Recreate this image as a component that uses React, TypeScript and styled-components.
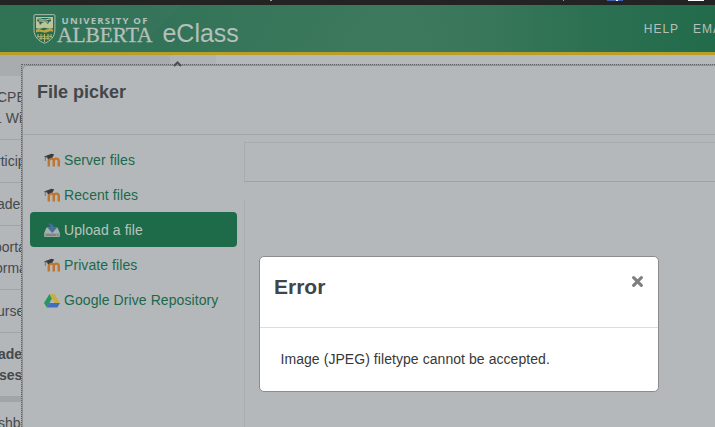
import React from "react";
import styled, { createGlobalStyle } from "styled-components";

const GlobalStyle = createGlobalStyle`
  * { box-sizing: border-box; }
  body { margin: 0; overflow: hidden; background: #b5b9bc; font-family: "Liberation Sans", Arial, sans-serif; }
`;

const Page = styled.div`
  position: relative;
  width: 715px;
  height: 427px;
  overflow: hidden;
  display: flex;
  flex-direction: column;
  font-size: 14px;
  color: #45494d;
`;

const BrowserStrip = styled.div`
  height: 5px;
  flex: none;
  background: #232323;
`;
const StripArt = styled.svg`
  display: block;
`;

const Header = styled.header`
  height: 50px;
  flex: none;
  display: flex;
  align-items: flex-start;
  border-bottom: 3px solid #b99f25;
  color: #b5c0bb;
  overflow: hidden;
  background:
    linear-gradient(135deg, transparent 0 128px, rgba(28, 104, 76, 0.14) 128px 200px, transparent 340px),
    linear-gradient(90deg, #2f7253 0, #33735a 120px, #3b785c 240px, #3f7a5e 390px, #39775a 480px, #2c7052 590px, #216b4b 715px);
`;
const MenuEdge = styled.div`
  width: 1px;
  height: 31px;
  margin-top: 8px;
  background: #b5c0bb;
`;
const Crest = styled.svg`
  width: 23px;
  height: 30px;
  margin: 9px 0 0 33px;
  flex: none;
`;
const Wordmark = styled.div`
  width: 97px;
  margin: 10px 0 0 1px;
  white-space: nowrap;
`;
const University = styled.div`
  font: bold 9.5px/11px "Open Sans", "Noto Sans", sans-serif;
  letter-spacing: 1.25px;
  padding-left: 4.5px;
`;
const Alberta = styled.div`
  font: 21.5px/20px "Liberation Serif", serif;
  letter-spacing: -0.1px;
  -webkit-text-stroke: 0.3px #b5c0bb;
  margin-top: -1px;
`;
const Product = styled.div`
  font-size: 25px;
  line-height: 29px;
  margin: 14px 0 0 10px;
`;
const Nav = styled.nav`
  display: flex;
  gap: 14px;
  margin: 17px 0 0 405px;
  font-size: 12px;
  line-height: 14px;
  letter-spacing: 0.95px;
  white-space: nowrap;
`;

const Body = styled.main`
  flex: 1;
  display: flex;
  min-height: 0;
  background: linear-gradient(90deg, #a8acaf 170px, #afb3b6 170px 216px, #b5b9bc 216px);
`;
const Sidebar = styled.aside`
  width: 21px;
  flex: none;
  padding-top: 21px;
  white-space: nowrap;
  line-height: 21px;
`;
const Entry = styled.div<{ $height: number; $strong?: boolean; $last?: boolean }>`
  height: ${(p) => p.$height}px;
  display: flex;
  flex-direction: column;
  justify-content: center;
  background: #b3b7ba;
  border-bottom: ${(p) => (p.$last ? "6px solid #a1a5a8" : "1px solid #a0a4a7")};
  font-weight: ${(p) => (p.$strong ? "bold" : "normal")};
`;
const Line = styled.span<{ $shift?: number }>`
  margin-left: ${(p) => p.$shift ?? 0}px;
`;

const Picker = styled.section`
  position: relative;
  flex: 1;
  margin: 9px -8px -8px 0;
  border: 1px dotted #5d6164;
  background: #a2a6a9;
`;
const PickerPanel = styled.div`
  height: 100%;
  border: 1px solid #8e9295;
  border-radius: 5px 0 0;
  background: #b4b8bb;
`;
const PickerHeader = styled.div`
  height: 69px;
  padding: 16px 0 0 14px;
  border-bottom: 1px solid #a2a6a9;
`;
const PickerTitle = styled.h2`
  margin: 0;
  font-size: 18px;
  line-height: 21px;
  color: #43474a;
`;
const PickerBody = styled.div`
  display: flex;
  height: 300px;
`;
const Repositories = styled.div`
  width: 221px;
  padding: 7px 7px 0;
  flex: none;
`;
const Repository = styled.div<{ $active?: boolean }>`
  height: 35px;
  display: flex;
  align-items: center;
  gap: 4px;
  padding-left: 14px;
  border-radius: 4px;
  font-size: 14px;
  letter-spacing: 0.08px;
  white-space: nowrap;
  color: ${(p) => (p.$active ? "#b7c5bf" : "#1b694a")};
  background: ${(p) => (p.$active ? "#1e6b49" : "transparent")};
`;
const RepoIcon = styled.svg`
  width: 16px;
  height: 16px;
  flex: none;
  margin-top: 3px;
`;
const Content = styled.div`
  flex: 1;
  padding-top: 7px;
`;
const Toolbar = styled.div`
  height: 40px;
  border: 1px solid #a8acaf;
  border-bottom-color: #9fa3a6;
`;
const Files = styled.div`
  height: 250px;
  margin-top: 18px;
  border-left: 1px solid #a9adb0;
`;

const Dialog = styled.div`
  position: absolute;
  left: 259px;
  top: 256px;
  width: 400px;
  height: 136px;
  border: 1px solid #898b8d;
  border-radius: 5px;
  background: #fff;
`;
const DialogHeader = styled.div`
  height: 71px;
  display: flex;
  justify-content: space-between;
  align-items: flex-start;
  padding: 17px 15px 0 14px;
  border-bottom: 1px solid #ddd;
`;
const DialogTitle = styled.h3`
  margin: 0;
  font-size: 21px;
  line-height: 25px;
  color: #414549;
`;
const Message = styled.p`
  margin: 0;
  padding: 23px 20px 0 20.5px;
  font-size: 14px;
  line-height: 16px;
  letter-spacing: 0.06px;
  color: #383838;
`;
const Close = styled.svg`
  width: 11px;
  height: 11px;
  margin-top: 2px;
`;
const ScrollCaret = styled.svg`
  position: absolute;
  left: 173px;
  top: 61px;
  width: 9px;
  height: 6px;
`;

function Moodle() {
  return (
    <RepoIcon viewBox="0 0 16 16">
      <path d="M4.800 13.500V8.200q0-2.600 2.500-2.600t2.500 2.600v5.300M9.800 8.200q0-2.600 2.500-2.600t2.500 2.600v5.300" fill="none" stroke="#be762e" strokeWidth="2.400" />
      <path d="M0 3.600 7.500.8l2.700.8L8.200 4.800Q6 4.300 4 6.400L3 4.300Z" fill="#383a3b" />
      <path d="M.500 3.700 4 4.300M1.300 3.800V8" fill="none" stroke="#555759" strokeWidth=".7" />
    </RepoIcon>
  );
}
function Upload() {
  return (
    <RepoIcon viewBox="0 0 16 16">
      <path d="M2.500 4.500h11L15.800 10v3.300q0 .8-1 .8H1.200q-1 0-1-.8V10Z" fill="#a5b1ad" />
      <path d="M.500 10.300h15v3.200H.500Z" fill="#939b9a" />
      <path d="M2 12h10M13.200 12h1" stroke="#657672" strokeWidth="1" />
      <path d="M3.200.800c3.500-.8 6.800 1 7 4h2.300L8.300 9.700 4.200 5h2.500c0-1.900-1.200-3.500-3.500-4.200Z" fill="#496fa0" stroke="#345983" strokeWidth=".4" />
    </RepoIcon>
  );
}
function Drive() {
  return (
    <RepoIcon viewBox="0 0 16 16">
      <path d="M5.400 1 8 5.400 2.800 14.600 0 10Z" fill="#2c9460" />
      <path d="M5.400 1h5.200L16 10h-5.400Z" fill="#c5ae45" />
      <path d="M5.300 10H16l-2.700 4.600H2.700Z" fill="#416fbd" />
    </RepoIcon>
  );
}

const repositories = [
  { name: "Server files", icon: <Moodle /> },
  { name: "Recent files", icon: <Moodle /> },
  { name: "Upload a file", icon: <Upload />, active: true },
  { name: "Private files", icon: <Moodle /> },
  { name: "Google Drive Repository", icon: <Drive /> },
];

const entries: { lines: [string, number][]; height: number; strong?: boolean; last?: boolean }[] = [
  { lines: [["CPE", -3], ["1 Wi", -6]], height: 64 },
  { lines: [["rticip", -4]], height: 43 },
  { lines: [["ades", -3]], height: 43 },
  { lines: [["porta", -6], ["orma", -5]], height: 64 },
  { lines: [["urse", -3]], height: 43 },
  { lines: [["ade", -2], ["ses", -1]], height: 69, strong: true, last: true },
  { lines: [["shbo", -2]], height: 43 },
];

export default function App() {
  return (
    <>
      <GlobalStyle />
      <Page>
        <BrowserStrip>
          <StripArt width="715" height="5">
            <path d="M270 0h2v1h-2Z" fill="#a8a296" />
            <path d="M563 0h1v1h-1Z" fill="#75b7a0" />
            <path d="M607 0h16v1h-16Z" fill="#3e62b0" />
            <path d="M616 0h2v1h-2ZM688 0h16v1h-16Z" fill="#fff" />
          </StripArt>
        </BrowserStrip>
        <Header>
          <MenuEdge />
          <Crest viewBox="0 0 23 30">
            <path d="M2 .7h19q.9 0 .9 1v14c0 7-4.400 11.400-10.400 13.500C5.400 27 1 22.700 1 15.700v-14q0-1 1-1Z" fill="#286b4d" stroke="#adc0b4" strokeWidth="1" />
            <path d="M3 3h17v11c-4 2-7-1-10 0s-5 1-7 0Z" fill="#bfc397" />
            <path d="M5 4h13v3l-2 1-1 2-3-2-3 1-2 2-1-3-2-1Z" fill="#2b6650" />
            <path d="M5 5h3l2 1h3l3-1h2M6 7h3l2 1h4" fill="none" stroke="#d0d1aa" strokeWidth="1" />
            <path d="M3 15.600c4-2 6 2 10 0 3-1.300 5-1 7 0v2.200c-4-2-6 2-10 .5-3-1-5-.7-7 .2Z" fill="#c0a43b" />
            <path d="M5 20v4M8 20v6M11.500 20v8M15 20v6M18 20v4M4 22l3 1 3-1 3 1 3-1 3 1M6 25l3-1 3 1 3-1 2 1" fill="none" stroke="#b8b569" strokeWidth="1" />
          </Crest>
          <Wordmark>
            <University>UNIVERSITY OF</University>
            <Alberta>ALBERTA</Alberta>
          </Wordmark>
          <Product>eClass</Product>
          <Nav><span>HELP</span><span>EMAIL</span></Nav>
        </Header>
        <Body>
          <Sidebar>
            {entries.map((entry) => (
              <Entry key={entry.lines[0][0]} $height={entry.height} $strong={entry.strong} $last={entry.last}>
                {entry.lines.map(([text, shift]) => <Line key={text} $shift={shift}>{text}</Line>)}
              </Entry>
            ))}
          </Sidebar>
          <Picker>
            <PickerPanel>
              <PickerHeader><PickerTitle>File picker</PickerTitle></PickerHeader>
              <PickerBody>
                <Repositories>
                  {repositories.map((repo) => (
                    <Repository key={repo.name} $active={repo.active}>{repo.icon}<span>{repo.name}</span></Repository>
                  ))}
                </Repositories>
                <Content><Toolbar /><Files /></Content>
              </PickerBody>
            </PickerPanel>
          </Picker>
        </Body>
        <ScrollCaret viewBox="0 0 9 6"><path d="m1 5 3.500-3.500L8 5" fill="none" stroke="#4b4f52" strokeWidth="2" /></ScrollCaret>
        <Dialog>
          <DialogHeader>
            <DialogTitle>Error</DialogTitle>
            <Close viewBox="0 0 10 10"><path d="m1.500 1.500 7 7m0-7-7 7" stroke="#7f7f7f" strokeWidth="2.800" strokeLinecap="round" /></Close>
          </DialogHeader>
          <Message>Image (JPEG) filetype cannot be accepted.</Message>
        </Dialog>
      </Page>
    </>
  );
}
